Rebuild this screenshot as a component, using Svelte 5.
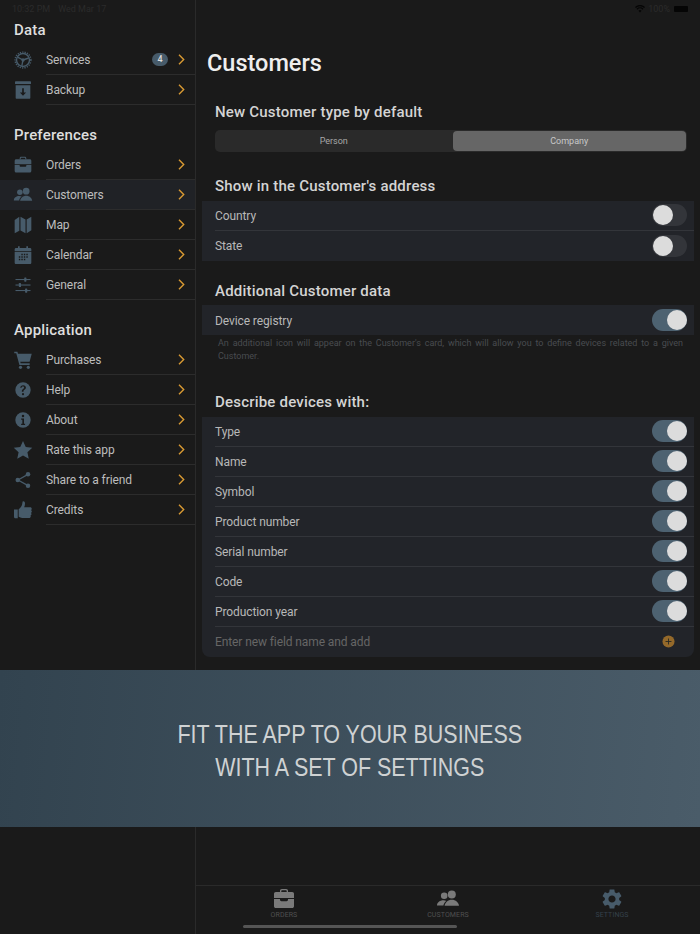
<script>
  const sections = [
    { title: 'Data', rows: [
      { label: 'Services', icon: 'services', badge: 4 },
      { label: 'Backup', icon: 'backup' }
    ]},
    { title: 'Preferences', rows: [
      { label: 'Orders', icon: 'orders' },
      { label: 'Customers', icon: 'customers', active: true },
      { label: 'Map', icon: 'map' },
      { label: 'Calendar', icon: 'calendar' },
      { label: 'General', icon: 'general' }
    ]},
    { title: 'Application', rows: [
      { label: 'Purchases', icon: 'cart' },
      { label: 'Help', icon: 'help' },
      { label: 'About', icon: 'about' },
      { label: 'Rate this app', icon: 'star' },
      { label: 'Share to a friend', icon: 'share' },
      { label: 'Credits', icon: 'thumb' }
    ]}
  ];
  const fields = ['Type', 'Name', 'Symbol', 'Product number', 'Serial number', 'Code', 'Production year'];
  const gear = 'M19.14 12.94c.04-.3.06-.61.06-.94 0-.32-.02-.64-.07-.94l2.03-1.58c.18-.14.23-.41.12-.61l-1.92-3.32c-.12-.22-.37-.29-.59-.22l-2.39.96c-.5-.38-1.03-.7-1.62-.94l-.36-2.54c-.04-.24-.24-.41-.48-.41h-3.84c-.24 0-.43.17-.47.41l-.36 2.54c-.59.24-1.13.57-1.62.94l-2.39-.96c-.22-.08-.47 0-.59.22L2.74 8.87c-.12.21-.08.47.12.61l2.03 1.58c-.05.3-.09.63-.09.94s.02.64.07.94l-2.03 1.58c-.18.14-.23.41-.12.61l1.92 3.32c.12.22.37.29.59.22l2.39-.96c.5.38 1.03.7 1.62.94l.36 2.54c.05.24.24.41.48.41h3.84c.24 0 .44-.17.47-.41l.36-2.54c.59-.24 1.13-.56 1.62-.94l2.39.96c.22.08.47 0 .59-.22l1.92-3.32c.12-.22.07-.47-.12-.61l-2.01-1.58zM12 15.6c-1.98 0-3.6-1.62-3.6-3.6s1.62-3.6 3.6-3.6 3.6 1.62 3.6 3.6-1.62 3.6-3.6 3.6z';
</script>

{#snippet briefcase()}
  <path d="M8 5V3.800C8 2.800 8.800 2 9.800 2h4.400c1 0 1.800.8 1.800 1.800V5h-1.300V3.900c0-.4-.3-.7-.7-.7H10c-.4 0-.7.3-.7.700V5z"/>
  <path d="M3.800 5h16.400C21.200 5 22 5.800 22 6.800V11H2V6.800C2 5.800 2.800 5 3.800 5z"/>
  <path d="M2 12h6v.8c0 .8.600 1.400 1.400 1.400h5.200c.8 0 1.400-.6 1.400-1.400V12h6v7.200c0 1-.8 1.800-1.800 1.800H3.800C2.800 21 2 20.200 2 19.200z"/>
{/snippet}

{#snippet people()}
  <circle cx="8.200" cy="8.800" r="3.300"/>
  <circle cx="15.800" cy="7.400" r="4"/>
  <path d="M1 18.500c0-3 3-5.200 6.400-5.200 1.200 0 2.200.2 3 .6-1.600 1-2.700 2.700-3 4.600z"/>
  <path d="M8.600 18.800c.4-3.300 3.400-6 7.200-6 3.900 0 6.800 2.700 7.200 6z"/>
{/snippet}

{#snippet icon(name)}
  <svg class="ico" viewBox="0 0 24 24" aria-hidden="true">
    {#if name === 'services'}
      <circle cx="12" cy="12" r="7.800" fill="none" stroke="currentColor" stroke-width="1.700"/>
      <circle cx="12" cy="12" r="9.500" fill="none" stroke="currentColor" stroke-width="1.700" stroke-dasharray="1.500 1.400"/>
      <circle cx="12" cy="12" r="2"/>
      <path d="M12 12 5.500 8.500M12 12l6.800-2.400M12 12l-1.400 7" stroke="currentColor" stroke-width="1.600" fill="none"/>
    {:else if name === 'backup'}
      <rect x="2.400" y="1.500" width="19.200" height="3.400" rx=".5"/>
      <path fill-rule="evenodd" d="M3.200 6.200h17.600v15.200c0 .7-.5 1.200-1.200 1.200H4.400c-.7 0-1.200-.5-1.200-1.200zM11 10v5H8.300l3.700 4 3.700-4H13v-5z"/>
    {:else if name === 'orders'}
      {@render briefcase()}
    {:else if name === 'customers'}
      {@render people()}
    {:else if name === 'map'}
      <path d="M2 6 7.600 2.200v16.600L2 22z"/>
      <path d="M9 2.200l6 3.200v16.400l-6-3.200z"/>
      <path d="M16.400 5.400 22 2v16.400l-5.600 3.400z"/>
    {:else if name === 'calendar'}
      <path d="M6 1.500h2v2h8v-2h2v2h2.500c.8 0 1.500.7 1.500 1.500v2.500H2V5c0-.8.7-1.500 1.500-1.500H6z"/>
      <path fill-rule="evenodd" d="M2 8.500h20v12.700c0 .8-.7 1.500-1.500 1.500h-17c-.8 0-1.500-.7-1.500-1.500zM10 10.500v1.700h1.700v-1.700zM13 10.500v1.700h1.700v-1.700zM16 10.500v1.700h1.700v-1.700zM7 13.500v1.700h1.700v-1.700zM10 13.500v1.700h1.700v-1.700zM13 13.500v1.700h1.700v-1.700zM16 13.500v1.700h1.700v-1.700zM7 16.500v1.700h1.700v-1.700zM10 16.500v1.700h1.700v-1.700zM13 16.500v1.700h1.700v-1.700z"/>
    {:else if name === 'general'}
      <rect x="3" y="4.800" width="18" height="1.300"/><rect x="3" y="11.400" width="18" height="1.300"/><rect x="3" y="18" width="18" height="1.300"/>
      <rect x="13.500" y="3" width="2.600" height="5" rx=".7"/><rect x="7" y="9.500" width="2.600" height="5" rx=".7"/><rect x="14.500" y="16.200" width="2.600" height="5" rx=".7"/>
    {:else if name === 'cart'}
      <path d="M1.500 2h3.800l.7 2.500h16.500l-2.600 9.500H8.700l.5 2H20v2H7.700L3.900 4H1.500z"/>
      <circle cx="9" cy="20.800" r="1.900"/><circle cx="18.400" cy="20.800" r="1.900"/>
    {:else if name === 'help'}
      <circle cx="12" cy="12" r="9.200"/>
      <path d="M8.700 9.400C8.800 7.400 10.200 6.200 12.200 6.200c2 0 3.300 1.200 3.300 2.900 0 1.300-.7 2-1.700 2.700-.9.600-1.200 1-1.200 1.900v.5h-2v-.7c0-1.300.5-2 1.500-2.700.9-.6 1.300-1 1.300-1.700 0-.8-.6-1.300-1.500-1.300-1 0-1.500.6-1.600 1.600z" fill="#1a1a1a"/>
      <circle cx="12" cy="17" r="1.300" fill="#1a1a1a"/>
    {:else if name === 'about'}
      <circle cx="12" cy="12" r="9.200"/>
      <circle cx="12" cy="7.300" r="1.500" fill="#1a1a1a"/>
      <path d="M9.800 10.200h3.400v6.400h1.300v1.500H9.800v-1.500h1.400v-4.900H9.800z" fill="#1a1a1a"/>
    {:else if name === 'star'}
      <path d="M12 1.200l3.300 7.300 7.800.9-5.800 5.300 1.600 7.800-6.900-4-6.900 4 1.600-7.800L.9 9.400l7.800-.9z"/>
    {:else if name === 'share'}
      <path d="M17.500 5.500 6 12l11.500 6.500" fill="none" stroke="currentColor" stroke-width="1.500"/>
      <circle cx="18" cy="5" r="2.700"/><circle cx="5.700" cy="12" r="2.700"/><circle cx="18" cy="19" r="2.700"/>
    {:else if name === 'thumb'}
      <path d="M1.200 11.500h4.500V22H3.200c-1.100 0-2-.9-2-2z"/>
      <path d="M6.800 11.200c2-1.500 3.700-4 4.200-6.200.2-1.200.3-2.500.6-3.300 1.300-.7 2.800.3 2.800 2.500 0 1.800-.6 3.500-1 4.600h7.100c1.300 0 2 .8 2 1.800 0 .7-.3 1.200-.8 1.600.6.400.9 1 .9 1.700 0 .8-.4 1.400-1 1.700.4.400.6.900.6 1.400 0 .8-.5 1.400-1.200 1.700.2.300.3.700.3 1 0 1.100-.9 1.800-2 1.800H11c-1.600 0-3-.6-4.200-1.400z"/>
    {/if}
  </svg>
{/snippet}

{#snippet toggle(on)}
  <span class="toggle" class:on><span class="knob"></span></span>
{/snippet}

<div class="screen">
  <aside class="sidebar">
    {#each sections as s}
      <section class="navsec">
        <h2>{s.title}</h2>
        {#each s.rows as r}
          <div class="navrow" class:active={r.active}>
            <span class="navicon">{@render icon(r.icon)}</span>
            <div class="navbody">
              <span class="navlabel">{r.label}</span>
              {#if r.badge}<span class="badge">{r.badge}</span>{/if}
              <svg class="chev" viewBox="0 0 7 11" aria-hidden="true"><path d="M1 .8 5.700 5.500 1 10.200" fill="none" stroke="currentColor" stroke-width="1.400"/></svg>
            </div>
          </div>
        {/each}
      </section>
    {/each}
  </aside>

  <main class="content">
    <div class="statusright">
      <svg class="wifi" viewBox="0 0 16 12" aria-hidden="true"><path d="M8 11.500 5.600 8.800a3.400 3.400 0 0 1 4.800 0zM3.900 7 2.500 5.500a7.800 7.800 0 0 1 11 0L12.100 7a5.800 5.800 0 0 0-8.200 0zM1.400 4.300 0 2.800a11.300 11.300 0 0 1 16 0l-1.400 1.500a9.300 9.300 0 0 0-13.200 0z"/></svg>
      <span>100%</span>
      <span class="battery"></span>
    </div>
    <h1>Customers</h1>

    <h3 class="first">New Customer type by default</h3>
    <div class="segment">
      <span class="seg">Person</span>
      <span class="seg selected">Company</span>
    </div>

    <h3 class="addr">Show in the Customer's address</h3>
    <div class="group">
      <div class="row"><div class="rowbody"><span class="rowlabel">Country</span>{@render toggle(false)}</div></div>
      <div class="row"><div class="rowbody"><span class="rowlabel">State</span>{@render toggle(false)}</div></div>
    </div>

    <h3 class="extra">Additional Customer data</h3>
    <div class="group">
      <div class="row"><div class="rowbody"><span class="rowlabel">Device registry</span>{@render toggle(true)}</div></div>
    </div>
    <p class="note">An additional icon will appear on the Customer's card, which will allow you to define devices related to a given Customer.</p>

    <h3 class="describe">Describe devices with:</h3>
    <div class="group rounded">
      {#each fields as f}
        <div class="row"><div class="rowbody"><span class="rowlabel">{f}</span>{@render toggle(true)}</div></div>
      {/each}
      <div class="row"><div class="rowbody add">
        <span class="rowlabel placeholder">Enter new field name and add</span>
        <svg class="plus" viewBox="0 0 14 14" aria-hidden="true"><circle cx="7" cy="7" r="6.500"/><path d="M7 3.800v6.400M3.800 7h6.400" stroke="#2a2a24" stroke-width="1" fill="none"/></svg>
      </div></div>
    </div>

    <nav class="tabbar">
      <div class="tab"><svg viewBox="0 0 24 24" aria-hidden="true">{@render briefcase()}</svg><span>ORDERS</span></div>
      <div class="tab"><svg viewBox="0 0 24 24" aria-hidden="true">{@render people()}</svg><span>CUSTOMERS</span></div>
      <div class="tab current"><svg viewBox="0 0 24 24" aria-hidden="true"><path fill-rule="evenodd" d={gear}/></svg><span>SETTINGS</span></div>
    </nav>
  </main>

  <div class="statusleft"><span>10:32 PM</span><span>Wed Mar 17</span></div>
  <div class="banner"><span>FIT THE APP TO YOUR BUSINESS<br>WITH A SET OF SETTINGS</span></div>
  <div class="home"></div>
</div>

<style>
  :global(body) {
    margin: 0;
    background: #1a1a1a;
  }
  .screen {
    position: relative;
    display: grid;
    grid-template-columns: 196px 1fr;
    width: 700px;
    height: 934px;
    overflow: hidden;
    background: #1a1a1a;
    font-family: Roboto, "Noto Sans", sans-serif;
    color: #c4c4c4;
  }
  .sidebar {
    display: flex;
    flex-direction: column;
    gap: 18px;
    padding-top: 19px;
    box-sizing: border-box;
    height: 934px;
    border-right: 1px solid #2a2a2a;
  }
  .navsec:nth-child(2) {
    margin-top: 1px;
  }
  .navsec:nth-child(3) {
    margin-top: .6px;
  }
  .navsec:nth-child(3) .navlabel {
    padding-top: 1px;
  }
  .navsec h2 {
    margin: 0 0 4px 14px;
    height: 22px;
    font-size: 15px;
    line-height: 23px;
    font-weight: 500;
    letter-spacing: .2px;
    color: #dedede;
  }
  .navrow {
    display: flex;
    height: 30px;
    align-items: stretch;
  }
  .navrow.active {
    background: #202226;
  }
  .navicon {
    flex: 0 0 46px;
    display: flex;
    align-items: center;
    padding-left: 13.300px;
    box-sizing: border-box;
    color: #475b6a;
  }
  .ico {
    display: block;
    width: 20px;
    height: 20px;
    fill: currentColor;
  }
  .navbody {
    flex: 1;
    display: flex;
    align-items: center;
    border-bottom: 1px solid #2c2c2c;
    padding-right: 10px;
    min-width: 0;
  }
  .navlabel {
    flex: 1;
    font-size: 12px;
    letter-spacing: -.1px;
    color: #bdbdbd;
  }
  .badge {
    width: 16px;
    height: 13px;
    margin-right: 10px;
    border-radius: 6.500px;
    background: #475b6a;
    color: #ddd;
    font-size: 9px;
    font-weight: 500;
    line-height: 13px;
    text-align: center;
  }
  .chev {
    width: 7px;
    height: 11px;
    color: #d99a33;
  }
  .content {
    position: relative;
    display: flex;
    flex-direction: column;
    height: 934px;
    padding: 0 6px;
    box-sizing: border-box;
    min-width: 0;
  }
  h1 {
    margin: 47px 0 0 5px;
    height: 32px;
    font-size: 23.500px;
    line-height: 32px;
    font-weight: 500;
    color: #eeeeee;
  }
  h3 {
    margin: 0 0 0 13px;
    height: 22px;
    font-size: 15px;
    line-height: 22px;
    font-weight: 500;
    letter-spacing: .2px;
    color: #d4d4d4;
  }
  h3.first { margin-top: 22px; }
  h3.addr { margin-top: 23px; margin-bottom: 3.500px; }
  h3.extra { margin-top: 19px; margin-bottom: 3.500px; }
  h3.describe { margin-top: 29px; margin-bottom: 3.500px; }
  .segment {
    display: grid;
    grid-template-columns: 237.500px 1fr;
    height: 22px;
    margin: 7px 7px 0 13px;
    padding: 1px 1px 1px 0;
    box-sizing: border-box;
    background: #2a2a2a;
    border-radius: 5px;
  }
  .seg {
    font-size: 9px;
    line-height: 20px;
    text-align: center;
    color: #a8a8a8;
    border-radius: 4px;
  }
  .seg.selected {
    background: #666;
    color: #c8c8c8;
  }
  .group {
    background: #222429;
  }
  .group.rounded {
    border-radius: 0 0 8px 8px;
  }
  .row {
    height: 30px;
    padding-left: 13px;
    font-size: 12px;
    letter-spacing: -.1px;
  }
  .rowbody {
    display: flex;
    align-items: center;
    justify-content: space-between;
    box-sizing: border-box;
    height: 30px;
    padding-right: 7px;
    border-bottom: 1px solid #33353a;
    color: #b8b8b8;
  }
  .rowlabel {
    padding-top: 1px;
  }
  .row:last-child .rowbody {
    border-bottom: 0;
  }
  .toggle {
    position: relative;
    display: block;
    width: 35px;
    height: 22px;
    border-radius: 11px;
    background: #33353a;
  }
  .toggle.on {
    background: #4d6271;
  }
  .knob {
    position: absolute;
    top: 1px;
    left: 1px;
    width: 20px;
    height: 20px;
    border-radius: 50%;
    background: #dcdcdc;
  }
  .toggle.on .knob {
    left: 14.500px;
  }
  .note {
    margin: 2px 11px 0 16px;
    font-size: 9px;
    line-height: 12.500px;
    text-align: justify;
    color: #494c50;
  }
  .placeholder {
    color: #666;
  }
  .plus {
    width: 13px;
    height: 13px;
    margin-right: 12px;
    fill: #94692a;
  }
  .tabbar {
    position: absolute;
    left: 0;
    right: 0;
    top: 885px;
    bottom: 0;
    display: grid;
    grid-template-columns: repeat(3, 164px);
    justify-content: center;
    border-top: 1px solid #2a2a2a;
  }
  .tab {
    display: flex;
    flex-direction: column;
    align-items: center;
  }
  .tab svg {
    width: 24px;
    height: 24px;
    margin-top: 1px;
    fill: #7a7a7a;
  }
  .tab span {
    margin-top: -1.500px;
    font-size: 7px;
    line-height: 11px;
    color: #505050;
    letter-spacing: .1px;
  }
  .tab.current svg {
    fill: #475b6a;
  }
  .tab.current span {
    color: #35414b;
  }
  .statusleft {
    position: absolute;
    left: 12px;
    top: 2.500px;
    display: flex;
    gap: 8px;
    font-size: 9px;
    line-height: 12px;
    color: #2b2b2b;
  }
  .statusright {
    position: absolute;
    right: 12px;
    top: 2.500px;
    display: flex;
    align-items: center;
    gap: 3px;
    font-size: 9px;
    line-height: 12px;
    color: #2b2b2b;
  }
  .wifi {
    width: 10px;
    height: 8px;
    fill: #050505;
  }
  .battery {
    display: block;
    width: 14px;
    height: 6px;
    border-radius: 1px;
    background: #050505;
    margin-left: 1px;
  }
  .banner {
    position: absolute;
    left: 0;
    right: 0;
    top: 669.500px;
    height: 157px;
    padding-top: 6px;
    box-sizing: border-box;
    display: flex;
    align-items: center;
    justify-content: center;
    text-align: center;
    background: linear-gradient(95deg, #32434f, #4a5c69);
    font-family: "Liberation Sans", sans-serif;
    font-size: 25px;
    line-height: 33.500px;
    color: #cfd2d3;
  }
  .banner span {
    display: block;
    white-space: nowrap;
    transform: scaleX(.858);
  }
  .home {
    position: absolute;
    left: 243px;
    top: 925px;
    width: 214px;
    height: 3px;
    border-radius: 2px;
    background: #555;
  }
</style>
